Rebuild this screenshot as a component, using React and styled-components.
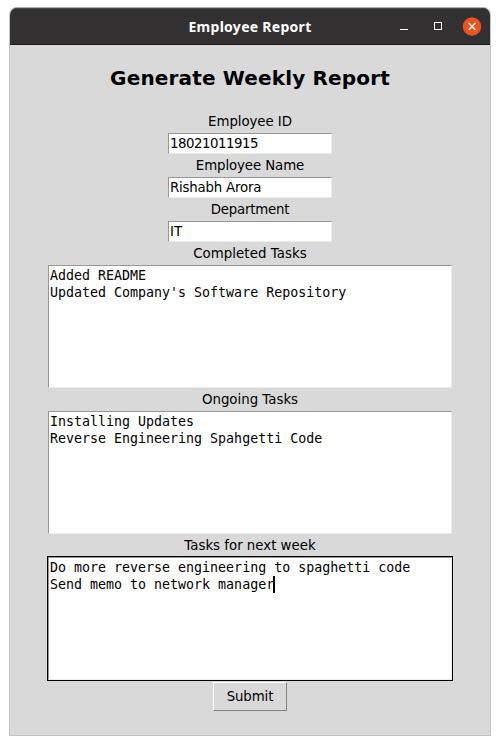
import React from "react";
import styled, { createGlobalStyle } from "styled-components";

const GlobalStyle = createGlobalStyle`
  * { box-sizing: border-box; }
  body { margin: 0; background: #fff; }
`;

const Window = styled.main`
  width: 482px;
  height: 729px;
  margin: 7px 0 0 9px;
  border: 1px solid #c2c2c2;
  border-top-color: #b0b0b0;
  border-radius: 8px 8px 0 0;
  overflow: hidden;
  background: #d9d9d9;
  color: #000;
  font-family: "DejaVu Sans", sans-serif;
  font-size: 13.33px;
`;

const TitleBar = styled.header`
  display: grid;
  grid-template-columns: 1fr auto 1fr;
  align-items: center;
  height: 37px;
  background: #333031;
  border-top: 1px solid #484646;
  border-bottom: 1px solid #1d1b1c;
`;

const Title = styled.h1`
  grid-column: 2;
  margin: 0;
  color: #fff;
  font: 700 14px/20px "Noto Sans", sans-serif;
  letter-spacing: ${(p) => p.$tracking}px;
`;

const Controls = styled.div`
  display: flex;
  justify-content: flex-end;
  padding-right: 8px;
`;

const Form = styled.form`
  display: flex;
  flex-direction: column;
  align-items: center;
  padding-top: 17px;
`;

const Heading = styled.h2`
  margin: 0 0 16px;
  font: 700 20px/33px "DejaVu Sans", sans-serif;
  height: 33px;
  white-space: nowrap;
  letter-spacing: ${(p) => p.$tracking}px;
`;

const Label = styled.label`
  height: 21px;
  line-height: 21px;
  white-space: nowrap;
  letter-spacing: ${(p) => p.$tracking}px;
`;

const Entry = styled.input`
  width: 164px;
  height: 21px;
  margin: 1px;
  padding: 0 1px 1px;
  border: 1px solid;
  border-color: #979797 #ececec #ececec #979797;
  border-radius: 0;
  outline: none;
  background: #fff;
  color: #000;
  font: inherit;
  line-height: 18px;
  letter-spacing: ${(p) => p.$tracking}px;
`;

const TextBox = styled.div`
  width: 406px;
  height: 125px;
  border: 1px solid ${(p) => (p.$focused ? "#000" : "#d9d9d9")};
`;

const TextContent = styled.div`
  height: 100%;
  padding: 1px;
  border: 1px solid;
  border-color: #979797 #ececec #ececec #979797;
  background: #fff;
  font: 13.3px/17px "DejaVu Sans Mono", monospace;
  white-space: pre;
`;

const Line = styled.div`
  display: flex;
  align-items: center;
  height: 17px;
`;

const Caret = styled.span`
  width: 2px;
  height: 17px;
  margin-left: -1px;
  background: #000;
`;

const Submit = styled.button`
  width: 74px;
  height: 29px;
  margin-top: 1px;
  padding: 0;
  border: 1px solid;
  border-color: #fff #828282 #828282 #fff;
  border-radius: 0;
  background: #d9d9d9;
  color: #000;
  font: inherit;
  letter-spacing: ${(p) => p.$tracking}px;
`;

const fields = [
  { label: "Employee ID", value: "18021011915", labelTracking: -0.06, tracking: -0.48 },
  { label: "Employee Name", value: "Rishabh Arora", labelTracking: -0.1, tracking: -0.2 },
  { label: "Department", value: "IT", labelTracking: -0.2, tracking: 0 },
];

const areas = [
  { label: "Completed Tasks", lines: ["Added README", "Updated Company's Software Repository"], tracking: 0.07 },
  { label: "Ongoing Tasks", lines: ["Installing Updates", "Reverse Engineering Spahgetti Code"], tracking: 0 },
  {
    label: "Tasks for next week",
    lines: ["Do more reverse engineering to spaghetti code", "Send memo to network manager"],
    tracking: 0,
    focused: true,
  },
];

function WindowControls() {
  return (
    <Controls>
      <svg width="83" height="20" viewBox="0 0 83 20" fill="none">
        <path d="M1 12.5h8" stroke="#fff" />
        <rect x="35.5" y="6.5" width="7" height="7" stroke="#fff" transform="translate(0 -1)" />
        <circle cx="73" cy="9.5" r="9.3" fill="#e95420" />
        <path d="M69.5 6l7 7m0-7l-7 7" stroke="#fff" strokeWidth="1.3" />
      </svg>
    </Controls>
  );
}

export default function App() {
  return (
    <>
      <GlobalStyle />
      <Window>
        <TitleBar>
          <Title $tracking={0.28}>Employee Report</Title>
          <WindowControls />
        </TitleBar>
        <Form onSubmit={(e) => e.preventDefault()}>
          <Heading $tracking={0.16}>Generate Weekly Report</Heading>
          {fields.map((f, i) => (
            <React.Fragment key={f.label}>
              <Label htmlFor={`field-${i}`} $tracking={f.labelTracking}>
                {f.label}
              </Label>
              <Entry id={`field-${i}`} defaultValue={f.value} $tracking={f.tracking} />
            </React.Fragment>
          ))}
          {areas.map((a) => (
            <React.Fragment key={a.label}>
              <Label as="div" $tracking={a.tracking}>{a.label}</Label>
              <TextBox $focused={a.focused}>
                <TextContent>
                  {a.lines.map((line, i) => (
                    <Line key={line}>
                      {line}
                      {a.focused && i === a.lines.length - 1 && <Caret />}
                    </Line>
                  ))}
                </TextContent>
              </TextBox>
            </React.Fragment>
          ))}
          <Submit type="submit" $tracking={-0.1}>Submit</Submit>
        </Form>
      </Window>
    </>
  );
}
